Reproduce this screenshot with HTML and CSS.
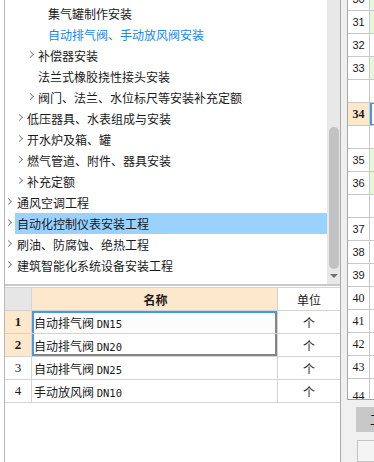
FILE: index.html
```html
<!DOCTYPE html>
<html lang="zh-CN">
<head>
    <meta charset="UTF-8">
    <title>定额库</title>
    <link rel="stylesheet" href="styles.css">
</head>
<body>
    <div class="app">
        <div class="left">
            <div class="tree-pane">
                <ul class="tree">
                    <li class="lv3">集气罐制作安装</li>
                    <li class="lv3 current">自动排气阀、手动放风阀安装</li>
                    <li class="lv2 has-kids">补偿器安装</li>
                    <li class="lv2">法兰式橡胶挠性接头安装</li>
                    <li class="lv2 has-kids">阀门、法兰、水位标尺等安装补充定额</li>
                    <li class="lv1 has-kids">低压器具、水表组成与安装</li>
                    <li class="lv1 has-kids">开水炉及箱、罐</li>
                    <li class="lv1 has-kids">燃气管道、附件、器具安装</li>
                    <li class="lv1 has-kids">补充定额</li>
                    <li class="lv0 has-kids">通风空调工程</li>
                    <li class="lv0 has-kids selected">自动化控制仪表安装工程</li>
                    <li class="lv0 has-kids">刷油、防腐蚀、绝热工程</li>
                    <li class="lv0 has-kids">建筑智能化系统设备安装工程</li>
                </ul>
                <div class="vscroll">
                    <div class="thumb"></div>
                    <div class="arrow"></div>
                </div>
            </div>
            <div class="grid-pane">
                <table class="items">
                    <tr class="head">
                        <th class="num"></th>
                        <th class="name">名称</th>
                        <th class="unit">单位</th>
                    </tr>
                    <tr class="sel first">
                        <td class="num">1</td>
                        <td class="name">自动排气阀 <span class="code">DN15</span></td>
                        <td class="unit">个</td>
                    </tr>
                    <tr class="sel last">
                        <td class="num">2</td>
                        <td class="name">自动排气阀 <span class="code">DN20</span></td>
                        <td class="unit">个</td>
                    </tr>
                    <tr>
                        <td class="num">3</td>
                        <td class="name">自动排气阀 <span class="code">DN25</span></td>
                        <td class="unit">个</td>
                    </tr>
                    <tr>
                        <td class="num">4</td>
                        <td class="name">手动放风阀 <span class="code">DN10</span></td>
                        <td class="unit">个</td>
                    </tr>
                </table>
            </div>
        </div>
        <div class="right">
            <div class="rows">
                <div class="row green"><span class="rn">30</span><span class="cell"></span></div>
                <div class="row green"><span class="rn">31</span><span class="cell"></span></div>
                <div class="row"><span class="rn">32</span><span class="cell"></span></div>
                <div class="row green"><span class="rn">33</span><span class="cell"></span></div>
                <div class="row"><span class="rn"></span><span class="cell"></span></div>
                <div class="row active"><span class="rn">34</span><span class="cell"></span></div>
                <div class="row"><span class="rn"></span><span class="cell"></span></div>
                <div class="row green"><span class="rn">35</span><span class="cell"></span></div>
                <div class="row green"><span class="rn">36</span><span class="cell"></span></div>
                <div class="row"><span class="rn"></span><span class="cell"></span></div>
                <div class="row"><span class="rn">37</span><span class="cell"></span></div>
                <div class="row"><span class="rn">38</span><span class="cell"></span></div>
                <div class="row"><span class="rn">39</span><span class="cell"></span></div>
                <div class="row serif"><span class="rn">40</span><span class="cell"></span></div>
                <div class="row serif"><span class="rn">41</span><span class="cell"></span></div>
                <div class="row serif"><span class="rn">42</span><span class="cell"></span></div>
                <div class="row serif"><span class="rn">43</span><span class="cell"></span></div>
                <div class="row serif tall"><span class="rn">44</span><span class="cell"></span></div>
            </div>
            <div class="tabs">
                <div class="tab">工</div>
                <div class="box"></div>
            </div>
        </div>
    </div>
</body>
</html>
```

FILE: styles.css
```css
body {
    margin: 0;
    font-family: "Noto Sans CJK SC", sans-serif;
    font-size: 12px;
    color: #1a1a1a;
    background-color: #fff;
}
.app {
    display: flex;
    width: 374px;
    height: 462px;
    overflow: hidden;
}
.left {
    margin-left: 4px;
    width: 335px;
    border-left: 1px solid #b8b8b8;
    border-right: 1px solid #a8a8a8;
    display: flex;
    flex-direction: column;
}
.tree-pane {
    height: 284px;
    border-bottom: 2px solid #c8c8c8;
    display: flex;
}
.tree {
    list-style: none;
    margin: 0;
    padding: 3px 0 0 0;
    width: 322px;
    overflow: hidden;
}
.tree li {
    height: 21px;
    line-height: 21px;
    white-space: nowrap;
    position: relative;
}
.tree li.lv0 { padding-left: 12px; }
.tree li.lv1 { padding-left: 22px; }
.tree li.lv2 { padding-left: 33px; }
.tree li.lv3 { padding-left: 43px; }
.tree li.has-kids::before {
    content: "";
    position: absolute;
    top: 7px;
    width: 4px;
    height: 4px;
    border-top: 1.5px solid #8c8c8c;
    border-right: 1.5px solid #8c8c8c;
    transform: rotate(45deg);
}
.tree li.lv0::before { left: 1px; }
.tree li.lv1::before { left: 12px; }
.tree li.lv2::before { left: 23px; }
.tree li.current {
    color: #1488f0;
}
.tree li.selected {
    background-color: #99d1ff;
    margin-left: 10px;
    padding-left: 2px;
}
.tree li.selected::before {
    left: -9px;
}
.vscroll {
    width: 13px;
    background-color: #e8e8e8;
    position: relative;
}
.vscroll .thumb {
    position: absolute;
    left: 2px;
    top: 127px;
    width: 10px;
    height: 142px;
    border-radius: 5px;
    background-color: #c2c2c2;
}
.vscroll .arrow {
    position: absolute;
    left: 3px;
    top: 274px;
    width: 0;
    height: 0;
    border-left: 4px solid transparent;
    border-right: 4px solid transparent;
    border-top: 4px solid #707070;
}
.grid-pane {
    padding-top: 1px;
    flex: 1;
}
.items {
    border-collapse: collapse;
    width: 335px;
    table-layout: fixed;
}
.items th,
.items td {
    height: 22px;
    border: 1px solid #d4d4d4;
    padding: 0;
    font-weight: normal;
    white-space: nowrap;
}
.items tr > :first-child { border-left: none; }
.items tr > :last-child { border-right: none; }
.items .num {
    width: 26px;
    text-align: center;
    font-family: "Liberation Serif", serif;
    font-size: 13px;
}
.items .name {
    width: 243px;
    padding-left: 2px;
    text-align: left;
}
.items .unit {
    text-align: center;
}
.items .head .num {
    background-color: #e6e6e6;
}
.items .head .name {
    background-color: #fde8cc;
    text-align: center;
    font-weight: bold;
}
.items .sel .num {
    background-color: #fde8cc;
    font-weight: bold;
}
.items .code {
    font-family: "DejaVu Sans Mono", monospace;
    font-size: 10.5px;
}
.items .sel.first .name {
    background-color: #fcfcfc;
    box-shadow: inset 2px 0 0 #4396f2, inset 0 2px 0 #4396f2, inset -2px 0 0 #858585;
}
.items .sel.last .name {
    box-shadow: inset 2px 0 0 #4396f2, inset -2px 0 0 #858585, inset 0 -2px 0 #858585;
}
.right {
    flex: 1;
    background-color: #f0f0f0;
    display: flex;
    flex-direction: column;
}
.rows {
    height: 407px;
    overflow: hidden;
    margin-left: 6px;
    border-left: 1px solid #a8a8a8;
    border-bottom: 1px solid #a0a0a0;
    background-color: #fff;
}
.rows .row {
    display: flex;
    height: 22px;
    border-bottom: 1px solid #c8c8c8;
}
.rows .row:first-child {
    margin-top: -12px;
}
.rows .rn {
    width: 21px;
    border-right: 1px solid #c8c8c8;
    text-align: center;
    line-height: 22px;
    font-family: "Liberation Sans", sans-serif;
    font-size: 11px;
}
.rows .cell {
    flex: 1;
}
.rows .green .cell {
    background-color: #e4f9d8;
}
.rows .active .rn {
    background-color: #fde8cc;
    font-family: "Liberation Serif", serif;
    font-weight: bold;
    font-size: 12px;
}
.rows .active .cell {
    box-shadow: inset 2px 0 0 #4396f2, inset 0 1px 0 #888, inset 0 -1px 0 #888;
}
.rows .serif .rn {
    font-family: "Liberation Serif", serif;
    font-size: 12px;
}
.rows .tall {
    height: 28px;
}
.rows .tall .rn {
    line-height: 34px;
}
.tabs {
    flex: 1;
    padding: 7px 0 0 15px;
}
.tab {
    height: 25px;
    background-color: #c8c8c8;
    padding-left: 14px;
    line-height: 25px;
    overflow: hidden;
}
.box {
    margin-top: 8px;
    margin-left: 1px;
    height: 20px;
    border: 1px solid #c4c4c4;
    border-right: none;
    background-color: #f4f4f4;
}
```
